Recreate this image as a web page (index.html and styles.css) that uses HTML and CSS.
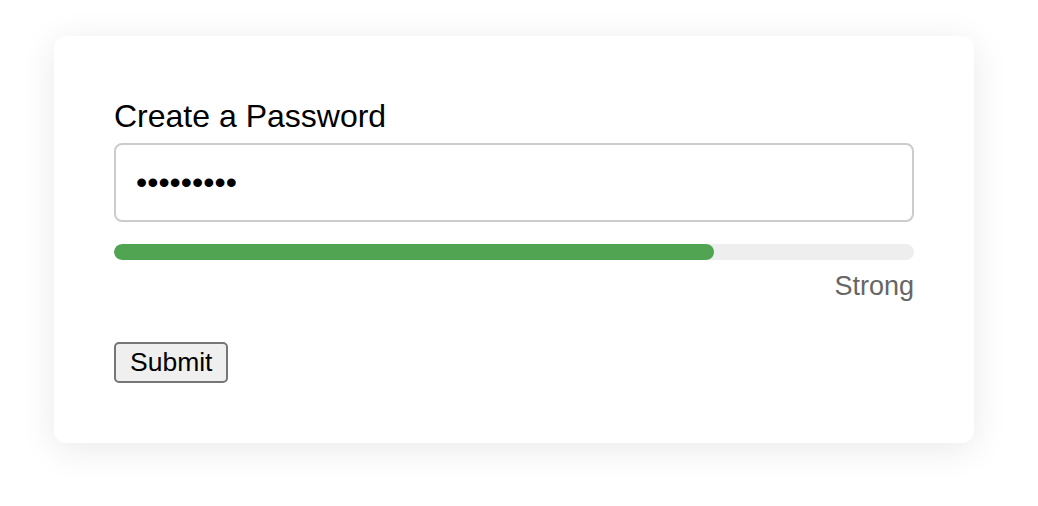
FILE: index.html
```html
<!DOCTYPE html>
<html lang="en">
<head>
    <meta charset="UTF-8">
    <meta name="viewport" content="width=device-width, initial-scale=1.0">
    <title>Create a Password</title>
    <link rel="stylesheet" href="styles.css">
</head>
<body>
    <form class="card" onsubmit="return false">
        <label class="label" for="password">Create a Password</label>
        <input class="input" type="password" id="password" value="secret123">
        <div class="meter">
            <div class="meter-fill" style="width: 75%"></div>
        </div>
        <div class="meter-text">Strong</div>
        <button class="submit" type="submit">Submit</button>
    </form>
</body>
</html>
```

FILE: styles.css
```css
body {
    margin: 0;
    background: #fff;
    font-family: "Liberation Sans", Arial, sans-serif;
}
.card {
    width: 920px;
    box-sizing: border-box;
    margin: 36px 54px;
    padding: 62px 60px 60px;
    background: #fff;
    border-radius: 12px;
    box-shadow: 0 6px 36px rgba(0, 0, 0, 0.09);
}
.label {
    display: block;
    font-size: 32px;
    margin-bottom: 8px;
    color: #000;
}
.input {
    display: block;
    width: 100%;
    height: 79px;
    box-sizing: border-box;
    padding: 0 20px;
    border: 2px solid #ccc;
    border-radius: 8px;
    font-family: "Liberation Sans", Arial, sans-serif;
    font-size: 32px;
    outline: none;
}
.meter {
    margin-top: 22px;
    height: 16px;
    background: #eee;
    border-radius: 8px;
    overflow: hidden;
}
.meter-fill {
    height: 100%;
    background: #51a552;
    border-radius: 8px;
}
.meter-text {
    margin-top: 11px;
    text-align: right;
    font-size: 27px;
    color: #666;
}
.submit {
    display: block;
    margin-top: 40px;
    height: 41px;
    padding: 0 14px;
    font-family: "Liberation Sans", Arial, sans-serif;
    font-size: 26.5px;
    color: #000;
    background: #efefef;
    border: 2px solid #767676;
    border-radius: 5px;
}
```
